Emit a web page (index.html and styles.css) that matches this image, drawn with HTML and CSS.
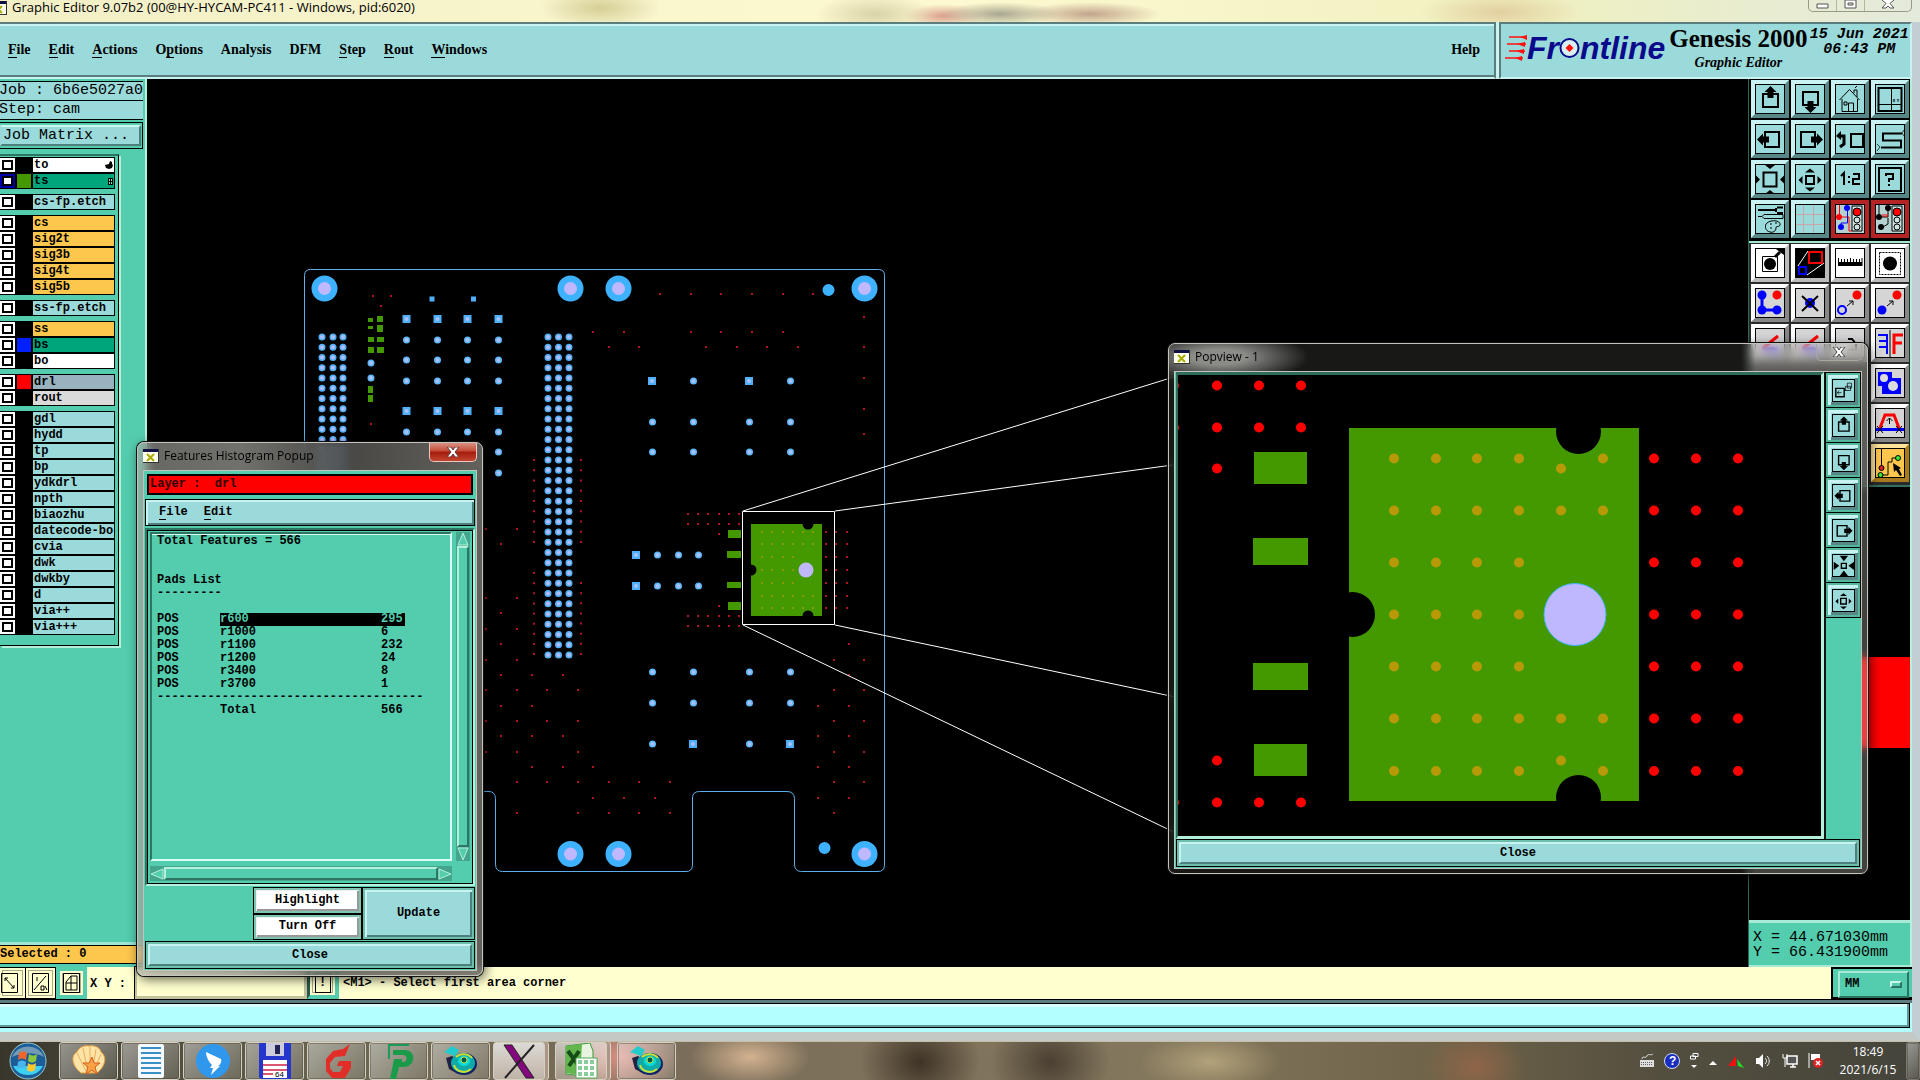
FILE: index.html
```html
<!DOCTYPE html>
<html lang="en">
<head>
<meta charset="utf-8">
<title>Graphic Editor 9.07b2</title>
<link rel="stylesheet" href="styles.css">
</head>
<body>
<svg class="defs" aria-hidden="true">
  <symbol id="i-up" viewBox="0 0 30 30"><path d="M8 10h15v13H8z" class="l2"/><path d="M15.500 2l6 6h-3v6h-6V8h-3z" class="f"/></symbol>
  <symbol id="i-down" viewBox="0 0 30 30"><path d="M8 8h15v13H8z" class="l2"/><path d="M15.500 29l6-6h-3v-6h-6v6h-3z" class="f"/></symbol>
  <symbol id="i-left" viewBox="0 0 30 30"><path d="M10 8h14v15H10z" class="l2"/><path d="M2 15.500l6-6v3h6v6H8v3z" class="f"/></symbol>
  <symbol id="i-right" viewBox="0 0 30 30"><path d="M6 8h14v15H6z" class="l2"/><path d="M28 15.500l-6-6v3h-6v6h6v3z" class="f"/></symbol>
  <symbol id="i-home" viewBox="0 0 30 30"><path d="M4.500 16L14.500 5.500l10 10.500M7 15v12.500h15.500V15M13.500 27V19h5v8M9 18h3v3H9zM19 9V6h3v7M20 4l2-2" class="l1"/></symbol>
  <symbol id="i-xy" viewBox="0 0 30 30"><path d="M3.500 4h23v23h-23z" class="l2"/><path d="M16.500 4v23M4 20.500h22" class="l1"/><path d="M18 15l2 3m0-3l-2 3M22 15l1 1.500 1-1.500M23 16.500V18" class="l1 thin"/></symbol>
  <symbol id="i-undo" viewBox="0 0 30 30"><path d="M16 10h12v13H16z" class="l2"/><path d="M5 12h4v8l-4 3" class="l3"/><path d="M1 12l5-5v9z" class="f"/></symbol>
  <symbol id="i-s" viewBox="0 0 30 30"><path d="M27 9.500H8v7h18v7H6" class="l2"/><path d="M29 6l-2 3 2 3M2 20l3 3-3 4" class="l1 thin"/></symbol>
  <symbol id="i-zoomout" viewBox="0 0 30 30"><path d="M8.500 8.500h13v14h-13z" class="l2"/><path d="M15 5l-5-4h10zM15 26l-5 4h10zM5 15.500l-4-4v8zM25 15.500l4-4v8z" class="f"/></symbol>
  <symbol id="i-zoomin" viewBox="0 0 30 30"><path d="M11 12h8v8h-8z" class="l2"/><path d="M15 4.500l5 4H10zM15 27.500l-5-4h10zM3.500 16l4-4v8zM26.500 16l-4-4v8z" class="f"/></symbol>
  <symbol id="i-shrink" viewBox="0 0 30 30"><path d="M12 12h7v7h-7z" class="l2"/><path d="M15.500 9l-6-8h12zM15.500 22l-6 8h12zM9 15.500l-8-6v12zM22 15.500l8-6v12z" class="f"/></symbol>
  <symbol id="i-12" viewBox="0 0 30 30"><path d="M6 12l3-3v12M14 12v2M14 17v2M18 10h6v5h-6v5h7" class="l2"/></symbol>
  <symbol id="i-help" viewBox="0 0 30 30"><path d="M4 4h22v23H4z" class="l2"/><path d="M11 12v-2h7v5h-4v3M14 20v2" class="l2"/></symbol>
  <symbol id="i-tools" viewBox="0 0 30 30"><path d="M3 6h18M22 3.500h6M22 9h6M21 4v4" class="l2"/><path d="M3 12.500h4l2-2h19v4H9l-2-2M11 20c4-5 15-4 14 1-1 3-4 0-4 3s-3 5-6 4c-5-1-5-6-4-8zM15 20h2M20 19h2M15 24h2" class="l1"/></symbol>
  <symbol id="i-grid" viewBox="0 0 30 30"><path d="M8.500 1v28M18.500 1v28M1 10.500h28M1 20.500h28" class="l1 pink"/></symbol>
  <symbol id="i-net" viewBox="0 0 30 30"><path d="M4.500 1v12H14v14h3" class="l1 red"/><path d="M12.500 5v14H6v4" class="l1 blue"/><circle cx="4" cy="13" r="3" fill="#f00"/><circle cx="12" cy="4" r="3" fill="#00f"/><circle cx="6" cy="23" r="3" fill="#00f"/><path d="M17 2h10v25H17z" class="l1 box"/><circle cx="22" cy="8" r="4" fill="#f00" stroke="#000"/><circle cx="22" cy="16" r="3" class="l1"/><circle cx="22" cy="23" r="3" class="l1"/></symbol>
  <symbol id="i-net2" viewBox="0 0 30 30"><path d="M4 1v12h9V5M13 14v6L8 23" class="l1"/><path d="M8 13v-3m2 3v-3m2 3v-3" class="l1 red"/><circle cx="4" cy="13" r="3"/><circle cx="13" cy="4" r="3"/><circle cx="6" cy="23" r="3"/><path d="M17 2h10v25H17z" class="l1 box"/><circle cx="22" cy="8" r="4" fill="#f00" stroke="#000"/><circle cx="22" cy="16" r="3" class="l1"/><circle cx="22" cy="23" r="3" class="l1"/></symbol>
  <symbol id="i-move" viewBox="0 0 30 30"><path d="M7.500 8.500h15v15h-15z" class="l1"/><circle cx="15" cy="16" r="6"/><path d="M20 9l5-5" class="l3"/><path d="M29 0v7l-8-6z" class="f"/></symbol>
  <symbol id="i-pop" viewBox="0 0 30 30"><path d="M0 0h30v30H0z" class="f"/><path d="M13 3L3 18M29 15L12 27" stroke="#fff" fill="none"/><path d="M14 4h13v11H14z" class="l2 red"/><path d="M4 19h7v7H4z" class="l2 blue"/></symbol>
  <symbol id="i-rule" viewBox="0 0 30 30"><path d="M3 14h24v4H3z" class="f"/><path d="M3.500 10v4M6.500 11v3M9.500 11v3M12.500 11v3M15.500 10v4M18.500 11v3M21.500 11v3M24.500 11v3M27 10v8" class="l1"/></symbol>
  <symbol id="i-sel" viewBox="0 0 30 30"><path d="M4.500 4.500h21v22h-21z" class="l1" stroke-dasharray="2 1"/><circle cx="15" cy="15.500" r="7"/></symbol>
  <symbol id="i-poly" viewBox="0 0 30 30"><path d="M7 7v15h15" class="l3 blue"/><circle cx="7" cy="7" r="4.500" fill="#00f"/><circle cx="7" cy="22" r="4.500" fill="#00f"/><circle cx="22" cy="22" r="4.500" fill="#00f"/><circle cx="22" cy="7" r="4.500" fill="#f00"/></symbol>
  <symbol id="i-del" viewBox="0 0 30 30"><circle cx="15" cy="15" r="5" fill="#00f"/><path d="M7 8l16 15M23 8L7 23" class="l2"/></symbol>
  <symbol id="i-mv1" viewBox="0 0 30 30"><circle cx="7" cy="22" r="4" class="l2 blue"/><circle cx="22" cy="7" r="4.500" fill="#f00"/><path d="M12 18l6-5m-4 0h4v4" class="l1"/></symbol>
  <symbol id="i-mv2" viewBox="0 0 30 30"><circle cx="7" cy="22" r="4.500" fill="#00f"/><circle cx="22" cy="7" r="4.500" fill="#f00"/><path d="M12 18l6-5m-4 0h4v4" class="l1"/></symbol>
  <symbol id="i-cut" viewBox="0 0 30 30"><path d="M8 20l15-12" class="l3 red"/><path d="M7 21h14v5" class="l3 blue"/></symbol>
  <symbol id="i-rot" viewBox="0 0 30 30"><path d="M13 11h4l4 5v6h-8" class="l2"/></symbol>
  <symbol id="i-mirror" viewBox="0 0 30 30"><path d="M3 7h9v19M4 13h8M4 19h8" class="l2 blue"/><path d="M15 2v27" class="l1"/><path d="M28 7h-9v19M27 15h-8" class="l3 red"/></symbol>
  <symbol id="i-copy" viewBox="0 0 30 30"><path d="M3 4h14v6h9v16H7v-8H3z" fill="#00f"/><circle cx="9" cy="10" r="4" fill="#ddd"/><circle cx="18" cy="18" r="5" fill="#ddd"/></symbol>
  <symbol id="i-trap" viewBox="0 0 30 30"><path d="M5 20L10 7h9l5 13" class="l3 red"/><path d="M0 21.500h30" class="l3 blue"/><path d="M14.500 16v-6m-3 3l3-3 3 3M2 18l6 7m0-7l-6 7M21 18l6 7m0-7l-6 7" class="l1"/></symbol>
  <symbol id="i-edit" viewBox="0 0 30 30"><path d="M6.500 1v18M6 27h7V14h4V10h5" class="l1"/><circle cx="6.500" cy="20" r="2.500" fill="#d22" stroke="#000"/><circle cx="5.500" cy="27" r="2.500" fill="#3e3" stroke="#000"/><circle cx="23" cy="10" r="2.500" fill="#3e3" stroke="#000"/><path d="M18 15l8 5-2 1 3 6-2 1-4-6-2 2z" class="f"/></symbol>
  <symbol id="i-view" viewBox="0 0 30 30"><path d="M4 12h12v12H4z" class="l2"/><path d="M20.500 4.500h6v7h-6zM18 9h7v6h-7zM16 15h3M12 18H6m3-3l-3 3 3 3" class="l1"/></symbol>
  <symbol id="i-win" viewBox="0 0 16 14"><path d="M0 0h16v14H0z" fill="#fffff0"/><path d="M0 0h16v3H0z" fill="#114"/><path d="M4 5l7 7M11 5l-7 7" stroke="#aa0" stroke-width="2"/><path d="M0 13.500h16M15.500 0v14" stroke="#333"/></symbol>
  <symbol id="i-disc" viewBox="0 0 36 36"><path d="M3 15l6-2 6 4v14l-9-5z" fill="#224"/><ellipse cx="21" cy="21" rx="13" ry="11" fill="#126"/><ellipse cx="20" cy="20" rx="12" ry="10" fill="#1aa"/><path d="M11 22a10 9 0 0 0 17 4M13 14a10 8 0 0 1 16 1" stroke="#cd3" stroke-width="2" fill="none"/><ellipse cx="21" cy="18" rx="6" ry="5" fill="#0dd"/><ellipse cx="21" cy="17" rx="3" ry="3" fill="#054" stroke="#cd3"/><path d="M1 9l8-6 7 4-4 6z" fill="#2cc"/></symbol>
</svg>

<header class="titlebar">
  <svg class="winicon"><use href="#i-win"/></svg>
  <h1>Graphic Editor 9.07b2 (00@HY-HYCAM-PC411 - Windows, pid:6020)</h1>
  <div class="caption">
    <button aria-label="Minimize"><svg width="14" height="12"><path d="M1 4h11v4H1z"/></svg></button>
    <button aria-label="Restore"><svg width="14" height="12"><path d="M1 0h11v8H1zM4 3h5v2H4z"/></svg></button>
    <button class="wide" aria-label="Close"><svg width="14" height="12"><path d="M1 0l4 3.500L1 8h4l2-2 2 2h4L9 3.500 13 0"/></svg></button>
  </div>
</header>

<div class="app">
  <div class="top">
    <nav class="menubar bevel-in">
      <a href="#"><u>F</u>ile</a><a href="#"><u>E</u>dit</a><a href="#"><u>A</u>ctions</a><a href="#">O<u>p</u>tions</a><a href="#">Analysis</a><a href="#">DFM</a><a href="#"><u>S</u>tep</a><a href="#"><u>R</u>out</a><a href="#"><u>W</u>indows</a><a href="#" class="help">Help</a>
    </nav>
    <div class="brand bevel-in">
      <div class="logo">
        <svg width="22" height="26"><path d="M4 2h18M2 9h19M4 16h16M0 23h18" stroke="#f11" stroke-width="1.500"/><path d="M22 0v5l-7-3zM20 7v5l-8-3zM19 14v5l-8-3zM17 21v5l-7-3z" fill="#f11"/></svg>
        <span>Fr</span><svg width="21" height="22"><circle cx="10.500" cy="11" r="9" fill="#d8f0f0" stroke="#0a0a8c" stroke-width="2"/><path d="M10.500 7l4 4-4 4-4-4z" fill="#f11"/></svg><span>ntline</span>
      </div>
      <div class="product"><strong>Genesis 2000</strong><em>Graphic Editor</em></div>
      <div class="date">15 Jun 2021<br>06:43 PM</div>
    </div>
  </div>

  <div class="work">
    <aside class="left">
      <div class="job"><div>Job : 6b6e5027a0</div><div>Step: cam</div></div>
      <div class="matrix"><button>Job Matrix ...</button></div>
      <div class="layers">
        <div class="grp">
          <label class="white"><input type="checkbox"><i></i><span>to<svg width="10" height="10"><path d="M1 5l4-1 1-3 2 1v2l1 1-1 3-3 1-3-1z"/></svg></span></label>
          <label class="green on"><input type="checkbox" checked><i class="c-green"></i><span>ts<svg width="6" height="7"><path d="M0 0h5v7H0z"/><path d="M1 1h1v2H1zM3 1h1v2H3zM1 4h1v2H1zM3 4h1v2H3z" fill="#9db"/></svg></span></label>
        </div>
        <div class="grp"><label><input type="checkbox"><i></i><span>cs-fp.etch</span></label></div>
        <div class="grp gold">
          <label><input type="checkbox"><i></i><span>cs</span></label>
          <label><input type="checkbox"><i></i><span>sig2t</span></label>
          <label><input type="checkbox"><i></i><span>sig3b</span></label>
          <label><input type="checkbox"><i></i><span>sig4t</span></label>
          <label><input type="checkbox"><i></i><span>sig5b</span></label>
        </div>
        <div class="grp"><label><input type="checkbox"><i></i><span>ss-fp.etch</span></label></div>
        <div class="grp">
          <label class="orange"><input type="checkbox"><i></i><span>ss</span></label>
          <label class="green"><input type="checkbox"><i class="c-blue"></i><span>bs</span></label>
          <label class="white"><input type="checkbox"><i></i><span>bo</span></label>
        </div>
        <div class="grp">
          <label class="slate"><input type="checkbox"><i class="c-red"></i><span>drl</span></label>
          <label class="grey"><input type="checkbox"><i></i><span>rout</span></label>
        </div>
        <div class="grp">
          <label><input type="checkbox"><i></i><span>gdl</span></label>
          <label><input type="checkbox"><i></i><span>hydd</span></label>
          <label><input type="checkbox"><i></i><span>tp</span></label>
          <label><input type="checkbox"><i></i><span>bp</span></label>
          <label><input type="checkbox"><i></i><span>ydkdrl</span></label>
          <label><input type="checkbox"><i></i><span>npth</span></label>
          <label><input type="checkbox"><i></i><span>biaozhu</span></label>
          <label><input type="checkbox"><i></i><span>datecode-bo</span></label>
          <label><input type="checkbox"><i></i><span>cvia</span></label>
          <label><input type="checkbox"><i></i><span>dwk</span></label>
          <label><input type="checkbox"><i></i><span>dwkby</span></label>
          <label><input type="checkbox"><i></i><span>d</span></label>
          <label><input type="checkbox"><i></i><span>via++</span></label>
          <label><input type="checkbox"><i></i><span>via+++</span></label>
        </div>
      </div>
      <div class="selected">Selected : 0</div>
    </aside>

    <svg class="canvas" id="board"></svg>

    <aside class="right">
      <div class="tools teal">
        <button aria-label="Pan up"><svg><use href="#i-up"/></svg></button>
        <button aria-label="Pan down"><svg><use href="#i-down"/></svg></button>
        <button aria-label="Home"><svg><use href="#i-home"/></svg></button>
        <button aria-label="XY window"><svg><use href="#i-xy"/></svg></button>
        <button aria-label="Pan left"><svg><use href="#i-left"/></svg></button>
        <button aria-label="Pan right"><svg><use href="#i-right"/></svg></button>
        <button aria-label="Previous"><svg><use href="#i-undo"/></svg></button>
        <button aria-label="Serpentine"><svg><use href="#i-s"/></svg></button>
        <button aria-label="Zoom out"><svg><use href="#i-zoomout"/></svg></button>
        <button aria-label="Zoom in"><svg><use href="#i-zoomin"/></svg></button>
        <button aria-label="Scale"><svg><use href="#i-12"/></svg></button>
        <button aria-label="Info"><svg><use href="#i-help"/></svg></button>
        <button aria-label="Setup"><svg><use href="#i-tools"/></svg></button>
        <button aria-label="Grid"><svg><use href="#i-grid"/></svg></button>
        <button class="alert" aria-label="Snap"><svg><use href="#i-net"/></svg></button>
        <button class="alert" aria-label="Snap off"><svg><use href="#i-net2"/></svg></button>
      </div>
      <div class="tools silver">
        <button class="lit" aria-label="Resize"><svg><use href="#i-move"/></svg></button>
        <button class="lit" aria-label="Popview"><svg><use href="#i-pop"/></svg></button>
        <button class="lit" aria-label="Measure"><svg><use href="#i-rule"/></svg></button>
        <button class="lit" aria-label="Select"><svg><use href="#i-sel"/></svg></button>
        <button aria-label="Polyline"><svg><use href="#i-poly"/></svg></button>
        <button aria-label="Delete"><svg><use href="#i-del"/></svg></button>
        <button aria-label="Move"><svg><use href="#i-mv1"/></svg></button>
        <button aria-label="Copy"><svg><use href="#i-mv2"/></svg></button>
        <button aria-label="Cut"><svg><use href="#i-cut"/></svg></button>
        <button aria-label="Break"><svg><use href="#i-cut"/></svg></button>
        <button aria-label="Rotate"><svg><use href="#i-rot"/></svg></button>
        <button aria-label="Mirror"><svg><use href="#i-mirror"/></svg></button>
        <button class="last" aria-label="Substitute"><svg><use href="#i-copy"/></svg></button>
        <button class="last" aria-label="Stretch"><svg><use href="#i-trap"/></svg></button>
        <button class="last gold" aria-label="Net edit"><svg><use href="#i-edit"/></svg></button>
      </div>
      <svg class="overview"><rect x="-10" y="170" width="172" height="91" fill="#f00"/></svg>
      <div class="coords">X = 44.671030mm<br>Y = 66.431900mm</div>
    </aside>
  </div>

  <div class="status">
    <button aria-label="Line mode"><svg width="17" height="20"><path d="M.5.5h16v19H.5z" class="l1"/><path d="M4 5l9 10M4 5v3m0-3h3M13 15v-3m0 3h-3" class="l1"/></svg></button>
    <button aria-label="Ratio mode"><svg width="17" height="20"><path d="M.5.5h16v19H.5z" class="l1"/><path d="M2 17L14 3M5 4v4M9 13h3v4H9zM13 13l2 4" class="l1"/></svg></button>
    <button class="act" aria-label="Snap mode"><svg width="17" height="20"><path d="M.5.5h16v19H.5z" class="l1"/><path d="M3 9l5-6h6v14H3zM8 3v14M3 10h11" class="l1"/></svg></button>
    <label for="xy">X Y :</label>
    <input id="xy" type="text">
    <button class="act bang" aria-label="Apply"><b>!</b></button>
    <p>&lt;M1&gt; - Select first area corner</p>
    <div class="unit"><button>MM<i></i></button></div>
  </div>
  <div class="prompt"><div></div></div>
</div>

<footer class="taskbar">
  <button class="start" aria-label="Start"><svg width="38" height="38"><circle cx="19" cy="19" r="18" fill="#1c5c98" stroke="#9cc" stroke-width="1"/><path d="M4 24a17 17 0 0 0 30 0z" fill="#3bd0f4"/><path d="M3 15a17 16 0 0 1 32 0c-9-5-20-5-32 0z" fill="#8ab" opacity=".8"/><path d="M10 11c3-2 5-2 8 0l-1 7c-3-2-5-2-8 0z" fill="#f3662b"/><path d="M20 12c3 2 5 2 8 0l-1 7c-3 2-5 2-8 0z" fill="#8cc63e"/><path d="M9 20c3-2 5-2 8 0l-1 7c-3-2-5-2-8 0z" fill="#4bb4ee"/><path d="M19 21c3 2 5 2 8 0l-1 7c-3 2-5 2-8 0z" fill="#fdc82c"/></svg></button>
  <button aria-label="Shell"><svg width="36" height="36"><path d="M10 30C0 22 0 12 6 9c2-5 8-7 12-6 5-1 11 1 12 6 6 4 5 14-4 21z" fill="#fce3a8" stroke="#e8a03c"/><path d="M16 30L6 10M17 30L12 5M19 30V4M21 30l4-24M22 30l8-19" stroke="#efae52" fill="none"/><path d="M21 14l2 6 6 0-5 4 2 7-5-4-6 4 2-7-5-4 6 0z" fill="#f7a046" stroke="#d35f1e"/></svg></button>
  <button aria-label="Notes"><svg width="36" height="36"><rect x="5" y="1" width="26" height="34" rx="2" fill="#f4faff"/><path d="M8 5h20M8 10h20M8 15h20M8 20h20M8 25h20M8 30h20" stroke="#3c8fc4" stroke-width="2"/></svg></button>
  <button aria-label="Messenger"><svg width="36" height="36"><circle cx="18" cy="18" r="17" fill="#2f97ec"/><path d="M11 9l15 7c1 3-1 6-3 7h2L16 32l2-7h-3l2-3c-3-3-6-8-6-13z" fill="#fff"/></svg></button>
  <button aria-label="Total Commander"><svg width="36" height="36"><path d="M2 0h32v36H4l-2-2z" fill="#2436cc"/><path d="M9 0h18v13H9z" fill="#ccd"/><path d="M18 2h5v9h-5z" fill="#225"/><path d="M6 17h24v18H6z" fill="#fff"/><path d="M6 22h24M6 27h24M6 31h10" stroke="#c24" stroke-width="1.500"/><text x="18" y="34" font-size="8" font-weight="normal" font-family="Liberation Sans">64</text></svg></button>
  <button aria-label="Genesis"><svg width="36" height="36"><path d="M31 1l-7 5-10 2-7 8v12l6 7h13l6-10v-7h-12l-2 5h6l-3 6h-7l-3-4v-5l5-6 10-1z" fill="#e22e28"/></svg></button>
  <button aria-label="Project"><svg width="36" height="36"><path d="M8 16V2h20" fill="none" stroke="#1a9b5a" stroke-width="2"/><path d="M12 7h13c12 2 8 18-3 17h-4l-3 12h-6l4-20h8v3h2c4-2 3-6 0-7H12z" fill="#1a9b4a"/></svg></button>
  <button aria-label="Genesis session"><svg width="36" height="36"><use href="#i-disc"/></svg></button>
  <button class="active" aria-label="X server"><svg width="36" height="36"><path d="M3 2h8l22 33h-8z" fill="#83087e" stroke="#222"/><path d="M33 2L4 35" stroke="#222" stroke-width="2"/></svg></button>
  <button class="stack" aria-label="Excel"><svg width="36" height="36"><path d="M3 3l24-3 3 8v26l-27-3z" fill="#e8f4e0" stroke="#3a9a3a"/><path d="M3 3l16-2-2 31-14-2z" fill="#62b64c"/><path d="M5 8l11 15M16 8L6 23" stroke="#164a16" stroke-width="4"/><path d="M13 15h21v20H13z" fill="#fff" stroke="#5a5"/><path d="M15 17h4v4h-4zM21 17h4v4h-4zM27 17h4v4h-4zM15 23h4v4h-4zM21 23h4v4h-4zM27 23h4v4h-4zM15 29h4v4h-4zM21 29h4v4h-4zM27 29h4v4h-4z" fill="#8c9"/></svg></button>
  <button aria-label="Genesis session 2"><svg width="36" height="36"><use href="#i-disc"/></svg></button>
  <div class="tray">
    <svg width="14" height="16"><path d="M0 7h14v7H0z" fill="#ddd"/><path d="M1 9.500h12M1 11.500h12" stroke="#666" stroke-dasharray="1 1"/><path d="M2 6c0-4 4 0 5-3s4 0 6-2" stroke="#ddd" fill="none"/></svg>
    <svg width="16" height="16"><circle cx="8" cy="8" r="7.500" fill="#1a2cc0" stroke="#cde"/><text x="5" y="12" font-size="12" font-weight="bold" fill="#fff" font-family="Liberation Sans">?</text></svg>
    <svg width="9" height="18"><path d="M3 1.500h5v3H3zM.5 4h5v3h-5z" fill="#444" stroke="#fff"/><path d="M1 13h6l-3 3z" fill="#fff"/></svg>
    <svg width="9" height="14"><path d="M0 11h8L4 7z" fill="#fff"/></svg>
    <svg width="16" height="18"><path d="M0 14L8 4v10z" fill="#e11"/><path d="M9 7l7 9-6-2z" fill="#2d2"/></svg>
    <svg width="16" height="16"><path d="M0 5h3l4-4v14l-4-4H0z" fill="#fff"/><path d="M9 5c2 2 2 4 0 6M11 3c3 3 3 7 0 10" stroke="#eee" fill="none"/></svg>
    <svg width="16" height="16"><path d="M5 3h10v8H5zM8 14h6M11 11v3" fill="#555" stroke="#fff" stroke-width="1.500"/><path d="M1 1v4h4V1M3 5v9" stroke="#fff" fill="none"/></svg>
    <svg width="16" height="16"><path d="M1 0v15" stroke="#fff"/><path d="M3 1h9v6H3z" fill="#fff"/><circle cx="10" cy="10" r="5" fill="#d22"/><path d="M8 8l4 4m0-4l-4 4" stroke="#fff" stroke-width="1.500"/></svg>
  </div>
  <time>18:49<br>2021/6/15</time>
  <button class="desk" aria-label="Show desktop"></button>
</footer>

<section class="win popview">
  <div class="wt"><svg class="winicon"><use href="#i-win"/></svg><h2>Popview - 1</h2><button class="x" aria-label="Close window"><svg width="14" height="10"><path d="M1 0l4 5-4 5h4l2-3 2 3h4L9 5l4-5H9L7 3 5 0z"/></svg></button></div>
  <div class="wbody">
    <div class="pv">
      <svg class="pvcanvas" id="detail"></svg>
      <div class="side">
        <button aria-label="View"><svg><use href="#i-view"/></svg></button>
        <button aria-label="Up"><svg><use href="#i-up"/></svg></button>
        <button aria-label="Down"><svg><use href="#i-down"/></svg></button>
        <button aria-label="Left"><svg><use href="#i-left"/></svg></button>
        <button aria-label="Right"><svg><use href="#i-right"/></svg></button>
        <button aria-label="Out"><svg><use href="#i-shrink"/></svg></button>
        <button aria-label="In"><svg><use href="#i-zoomin"/></svg></button>
      </div>
    </div>
    <div class="closebar"><button>Close</button></div>
  </div>
</section>

<section class="win hist">
  <div class="wt"><svg class="winicon"><use href="#i-win"/></svg><h2>Features Histogram Popup</h2><button class="x red" aria-label="Close window"><svg width="14" height="10"><path d="M1 0l4 5-4 5h4l2-3 2 3h4L9 5l4-5H9L7 3 5 0z"/></svg></button></div>
  <div class="wbody">
    <div class="layer">Layer :&nbsp; drl</div>
    <nav class="hmenu"><a href="#"><u>F</u>ile</a><a href="#"><u>E</u>dit</a></nav>
    <div class="frame">
      <div class="list">
        <div>Total Features = 566</div><br><br>
        <div>Pads List</div><div>---------</div><br>
        <table>
          <tr><td>POS</td><td class="hl">r600</td><td class="hl"><span>295</span></td></tr>
          <tr><td>POS</td><td>r1000</td><td>6</td></tr>
          <tr><td>POS</td><td>r1100</td><td>232</td></tr>
          <tr><td>POS</td><td>r1200</td><td>24</td></tr>
          <tr><td>POS</td><td>r3400</td><td>8</td></tr>
          <tr><td>POS</td><td>r3700</td><td>1</td></tr>
          <tr><td colspan="3">-------------------------------------</td></tr>
          <tr><td></td><td>Total</td><td>566</td></tr>
        </table>
      </div>
      <div class="vs"><svg width="12" height="14"><path d="M6 1l5 12H1z"/></svg><i></i><svg width="12" height="14"><path d="M6 13L1 1h10z"/></svg></div>
      <div class="hs"><svg width="14" height="12"><path d="M1 6l12-5v10z"/></svg><i></i><svg width="14" height="12"><path d="M13 6L1 1v10z"/></svg></div>
    </div>
    <div class="acts">
      <div class="pair"><button>Highlight</button><button>Turn Off</button></div>
      <button class="upd">Update</button>
    </div>
    <div class="closebar"><button>Close</button></div>
  </div>
</section>
<script src="script.js"></script>
</body>
</html>
```
FILE: styles.css
```css
* { box-sizing: border-box; }
html, body { height: 100%; }
body { margin: 0; display: flex; flex-direction: column; background: #000; overflow: hidden; position: relative; font: bold 12px/13px "Liberation Mono", monospace; color: #000; }
h1, h2, p { margin: 0; font: inherit; }
a { color: inherit; text-decoration: none; }
u { text-decoration: none; border-bottom: 1px solid #000; }
button { font: inherit; color: inherit; padding: 0; border-radius: 0; border: 0; background: none; }
button svg { display: block; }
.defs { position: absolute; width: 0; height: 0; }
.l1, .l2, .l3 { fill: none; stroke: #000; }
.l2 { stroke-width: 2; }
.l3 { stroke-width: 3; }
.thin { stroke-width: .7; }
.f { fill: #000; }
.red { stroke: #f00; }
.blue { stroke: #00f; }
.pink { stroke: #c9a5aa; }
.box { fill: #cde4e2; }
.winicon { width: 16px; height: 14px; flex: none; }

.titlebar { height: 22px; flex: none; display: flex; align-items: flex-start; padding-right: 8px;
  background: radial-gradient(ellipse 60px 20px at 875px 14px, #d9d3a8, transparent), radial-gradient(ellipse 60px 12px at 1000px 14px, #a9a690, transparent), radial-gradient(ellipse 40px 12px at 943px 16px, #dba08e, transparent), radial-gradient(ellipse 70px 12px at 1090px 14px, #c3a48c, transparent), radial-gradient(ellipse 60px 20px at 600px 8px, #d6cf96, transparent), radial-gradient(ellipse 80px 20px at 1500px 12px, #e3cfa0, transparent), linear-gradient(90deg, #f2eec6, #fdf9d0 50%, #eff0c0 80%, #e4eadc); }
.titlebar .winicon { margin-left: -9px; margin-top: 1px; }
.titlebar h1 { font: 13px/14px "Open Sans", sans-serif; margin-left: 5px; flex: 1; white-space: nowrap; }
.caption { display: flex; height: 12px; border: 1px solid #999a86; border-top: 0; border-radius: 0 0 5px 5px; }
.caption button { width: 28px; border-right: 1px solid #b5b59c; display: flex; justify-content: center; }
.caption .wide { width: 46px; border: 0; }
.caption svg path { fill: #fff; stroke: #555; fill-rule: evenodd; }

.app { flex: 1; min-height: 0; display: flex; flex-direction: column; border-right: 8px solid #c3ced3; border-bottom: 9px solid #c5c9c6; }
.top { display: flex; height: 57px; flex: none; background: #c9f2f2; gap: 3px; }
.bevel-in { background: #9bdada; border: 2px solid; border-color: #5b7d7d #c9f2f2 #c9f2f2 #5b7d7d; }
.menubar { flex: 1; display: flex; align-items: center; gap: 18px; padding: 0 14px 1px 8px; border-left: 0; border-right-color: #5b7d7d; box-shadow: inset 0 2px #c9f2f2, inset 0 -2px #5b7d7d; font: bold 14px/16px "Liberation Serif", serif; }
.help { margin-left: auto; }
.brand { width: 413px; display: flex; padding-left: 4px; }
.logo { display: flex; align-items: center; height: 48px; font: italic bold 32px/32px "Liberation Sans", sans-serif; color: #0a0a8c; }
.product { display: flex; flex-direction: column; align-items: center; margin-left: 3px; width: 140px; font-family: "Liberation Serif", serif; }
.product strong { font-size: 25px; line-height: 29px; white-space: nowrap; }
.product em { font-size: 14px; line-height: 20px; }
.date { flex: 1; text-align: center; font-size: 15px; line-height: 15px; font-style: italic; padding-top: 3px; white-space: nowrap; }

.work { flex: 1; min-height: 0; display: flex; }
.canvas { flex: 1; min-width: 0; height: 100%; display: block; }
.left { width: 147px; flex: none; background: #54cdae; border-right: 2px solid #b4f0dc; display: flex; flex-direction: column; white-space: nowrap; }
.job, .matrix { font: 15px/17px "Liberation Mono", monospace; border: 1px solid #000; background: #000; margin: 2px 2px 0 -2px; }
.job { display: grid; gap: 1px; }
.job div { background: #9bdada; height: 18px; }
.matrix { background: #54cdae; padding: 2px 1px; }
.matrix button { width: 100%; text-align: left; height: 21px; padding-left: 1px; background: #9bdada; border: 2px solid; border-color: #cdf6f0 #4d7f7c #4d7f7c #9bdada; }
.layers { margin-top: 5px; width: 119px; border: 1px solid #000; border-left: 0; border-top: 2px solid #2a7461; padding: 1px 3px 10px 0; display: grid; gap: 5px; box-shadow: 2px 2px #b4f0dc; }
.grp { background: #000; }
.grp label { display: grid; grid-template-columns: 15px 14px 1fr; column-gap: 2px; height: 16px; padding: 1px 1px 1px 0; align-items: stretch; }
.grp input { appearance: none; margin: 0; width: 15px; height: 14px; background: #fff; border: 2px solid #fff; box-shadow: inset 0 0 0 2px #000; }
.on input { border-color: #0000a8; }
.grp span { background: #9bdada; padding-left: 1px; line-height: 14px; display: flex; justify-content: space-between; align-items: center; overflow: hidden; }
.gold span, .orange span { background: #fdc74e; }
.white span { background: #fff; }
.grp .green span { background: #00a57c; }
.grp .orange span { background: #fdc74e; }
.grp .white span { background: #fff; }
.grp.gold span { background: #fdc74e; }
.grp .slate span { background: #98b3bf; }
.grp .grey span { background: #dadada; }
.c-green { background: #449900; }
.c-blue { background: #0020ff; }
.c-red { background: #f00; }
.selected { margin-top: auto; margin-bottom: 3px; height: 19px; line-height: 17px; background: #fdc74e; border: 1px solid #000; border-width: 1px 0; box-shadow: 0 -3px #9fe8d6; }

.right { width: 164px; flex: none; display: flex; flex-direction: column; border-left: 1px solid #2a6b58; border-right: 2px solid #b4f0dc; }
.tools { display: grid; grid-template-columns: repeat(4, 40px); grid-auto-rows: 40px; padding: 1px 0 1px 1px; background: #000; border-bottom: 2px solid #a4e5d0; }
.tools button { width: 38px; height: 38px; background: #9bdada; border: 4px solid; border-color: #c9f2f2 #578887 #578887 #c9f2f2; margin-left: 1px; }
.tools button svg { width: 30px; height: 30px; outline: 1px solid #000; outline-offset: -1px; }
.silver { background: #2b2b2b; border-bottom-color: #32705f; }
.silver button { background: #d5d5d5; border-color: #fff #878787 #878787 #fff; }
.silver .lit { background: #fff; border-color: #fff #bbb #bbb #fff; }
.tools .alert { border-color: #b42424; background: #b5d2d0; }
.silver .last { grid-column: 4; }
.silver .gold { background: #fdc74e; border-color: #ffe49a #a87a20 #a87a20 #ffe49a; }
.overview { flex: 1; min-height: 0; width: 100%; display: block; }
.coords { height: 47px; flex: none; background: #54cdae; border-top: 3px solid #a9ead6; border-bottom: 2px solid #a9ead6; padding: 7px 0 0 4px; font-size: 15px; line-height: 15px; font-weight: normal; }

.status { height: 33px; flex: none; display: flex; background: #ffffcf; border-bottom: 1px solid #000; }
.status > button { width: 30px; border: 1px solid #000; border-left: 0; box-shadow: inset 0 0 0 2px #ffffcf, inset 0 0 0 3px #aaa98a; display: grid; place-items: center; }
.status > button:first-child { width: 26px; padding-right: 6px; }
.status > .act { width: 31px; background: #ffffcf; border: 4px solid #54cdae; }
.status > .bang { width: 32px; border-left: 3px solid #24584a; }
.status b { border: 1px solid #000; width: 16px; height: 20px; line-height: 18px; }
.status label { padding: 11px 8px 0 3px; width: 48px; white-space: nowrap; }
.status input { width: 172px; background: #ffffcf; border: 3px solid #c3c29b; border-left-width: 2px; outline: 1px solid #000; font: inherit; }
.status p { flex: 1; padding: 10px 0 0 4px; }
.unit { width: 81px; background: #54cdae; border: 2px solid #000; border-right: 0; padding: 2px 3px 2px 5px; }
.unit button { width: 100%; height: 27px; display: flex; justify-content: space-between; align-items: center; padding: 0 5px; border: 2px solid; border-color: #a9ead6 #2a7461 #2a7461 #a9ead6; }
.unit i { width: 12px; height: 7px; border: 2px solid; border-color: #c9f9ec #2a7461 #2a7461 #c9f9ec; }
.prompt { height: 32px; flex: none; background: #b3ffff; border-top: 3px solid #5f7d80; padding: 0 2px 4px 0; }
.prompt div { height: 25px; border: 1px solid #000; border-left: 0; background: #b3ffff; box-shadow: inset -2px -2px #5f9899, inset 0 3px #d9ffff; }

.taskbar { height: 39px; flex: none; display: flex; align-items: center; border-top: 1px solid #c3bda9;
  background: radial-gradient(ellipse 60px 40px at 620px 15px, #d88f82, transparent), radial-gradient(ellipse 60px 30px at 750px 15px, #d3b290, transparent), radial-gradient(ellipse 70px 30px at 1210px 20px, #b3a27a, transparent), radial-gradient(ellipse 50px 40px at 1475px 25px, #8f6548, transparent), radial-gradient(ellipse 60px 50px at 920px 20px, #3f3326, transparent), radial-gradient(ellipse 60px 50px at 1050px 20px, #4a4032, transparent), linear-gradient(90deg, #38362c, #6b6753 18%, #7a6d59 35%, #83775d 60%, #6f6449 75%, #544f3f 86%, #45443b); }
.taskbar > button { width: 59px; height: 38px; margin-right: 3px; border: 1px solid #d5cfc0; border-radius: 3px; background: linear-gradient(135deg, rgba(255,255,255,.45), rgba(255,255,255,.1)); display: grid; place-items: center; box-shadow: inset 0 0 0 1px rgba(60,50,40,.35); flex: none; }
.taskbar .start { width: 56px; border: 0; background: none; box-shadow: none; }
.taskbar .active { width: 52px; background: linear-gradient(rgba(255,255,255,.75), rgba(255,240,235,.55)); box-shadow: 3px 0 #a99686, 4px 0 #e0d5c8; margin-right: 10px; }
.taskbar .stack { width: 52px; background: linear-gradient(rgba(255,255,255,.6), rgba(255,240,230,.35)); box-shadow: 3px 0 #a99686, 4px 0 #e0d5c8; margin-right: 10px; }
.tray { margin-left: auto; display: flex; gap: 10px; align-items: center; padding-right: 12px; }
.tray svg:nth-child(6) { margin-left: 2px; }
.taskbar time { width: 64px; text-align: center; color: #fff; font: 12px/18px "Open Sans", sans-serif; white-space: nowrap; }
.taskbar .desk { width: 14px; margin: 0 0 0 6px; border-color: #7c786d; }

.win { position: absolute; border: 1px solid #c4c4bd; border-radius: 7px; padding: 0 5px 4px; display: flex; flex-direction: column; backdrop-filter: blur(5px); box-shadow: 0 0 0 1px #111, 2px 3px 12px rgba(0,0,0,.65); }
.wt { display: flex; height: 27px; flex: none; }
.wt .winicon { margin-top: 6px; }
.wt h2 { font: 12px/14px "Open Sans", sans-serif; margin: 6px 0 0 5px; flex: 1; white-space: nowrap; }
.x { width: 46px; height: 17px; border: 1px solid #aaa89c; border-top: 0; border-radius: 0 0 5px 5px; display: grid; place-items: center; }
.x path { fill: #fff; stroke: #444; }
.x.red { height: 19px; width: 48px; background: linear-gradient(#d99183, #c44a36 45%, #a51b0c 50%, #c2452f); border-color: #e8c8c0; }
.x.red path { stroke: #633; }
.wbody { flex: 1; min-height: 0; display: flex; flex-direction: column; border: 1px solid #c4c4bd; background: #54cdae; padding: 0 1px 1px; }
.popview { left: 1168px; top: 343px; width: 700px; height: 531px; background: radial-gradient(ellipse 90px 26px at 50px 13px, #8b8b88 30%, transparent), linear-gradient(90deg, rgba(40,40,38,.6) 82%, rgba(190,188,180,.35) 84%); }
.hist { left: 137px; top: 442px; width: 346px; height: 534px; background: linear-gradient(90deg, rgba(170,170,165,.6), rgba(150,150,145,.75) 30%, rgba(90,88,85,.8) 60%, rgba(110,108,102,.9)); }
.pv { flex: 1; min-height: 0; display: flex; }
.pvcanvas { flex: 1; min-width: 0; height: 100%; background: #000; border: 3px solid; border-color: #2f6b5b #b4f0dc #b4f0dc #2f6b5b; border-left-width: 2px; display: block; }
.side { width: 36px; border-left: 2px solid #111; padding-top: 1px; }
.side button { width: 34px; height: 34px; margin-bottom: 1px; background: #9bdada; border: 2px solid #54b89c; outline: 1px solid #000; box-shadow: inset 3px 3px #c9f2f2, inset -3px -3px #578887; display: grid; place-items: center; }
.side svg { width: 21px; height: 21px; outline: 1px solid #000; }
.side .l2 { stroke-width: 3; }
.closebar { flex: none; height: 28px; border: 1px solid #000; padding: 2px; background: #6bbfab; }
.closebar button { width: 100%; height: 22px; background: #9bdada; border: 2px solid; border-color: #c9f2f2 #4d7f7c #4d7f7c #c9f2f2; }
.layer { margin: 3px 2px 0; height: 21px; background: #f00; border: 2px solid #000; padding: 2px 1px; color: #2a0000; flex: none; }
.hmenu { margin-top: 4px; height: 27px; flex: none; border: 1px solid #000; background: #9bdada; box-shadow: inset 2px 2px #c9f2f2, inset -2px -2px #4d7f7c; padding: 6px 13px; display: flex; gap: 16px; }
.frame { margin-top: 2px; flex: 1; min-height: 0; border: 2px solid; border-color: #2f7563 #b4f0dc #b4f0dc #2f7563; display: grid; grid-template: 1fr 15px / 1fr 14px; gap: 5px 4px; padding: 2px 3px 3px; box-shadow: inset 0 0 0 1px #000; }
.list { border: 2px solid; border-color: #2f7563 #d9fff4 #d9fff4 #2f7563; box-shadow: inset 0 1px #d9fff4; padding: 1px 0 0 5px; overflow: hidden; white-space: nowrap; }
table { border-collapse: collapse; table-layout: fixed; width: 248px; }
td { padding: 0; width: 63px; height: 13px; white-space: nowrap; }
td:nth-child(2) { width: 161px; }
td:nth-child(3) { width: 24px; }
.hl { background: #000; color: #54cdae; }
.vs, .hs { display: flex; background: #45a58c; }
.vs { flex-direction: column; align-items: center; }
.hs { align-items: center; }
.vs i, .hs i { flex: 1; background: #54cdae; border: 2px solid; border-color: #b4f0dc #2f7563 #2f7563 #b4f0dc; }
.vs i { width: 12px; }
.hs i { height: 13px; }
.vs path, .hs path { fill: #54cdae; stroke: #b4f0dc; }
.acts { display: flex; justify-content: flex-end; height: 55px; flex: none; padding: 1px 0; }
.pair { display: grid; grid-template-rows: 1fr 1fr; width: 109px; }
.pair button, .upd { background: #fff; border: 1px solid #000; box-shadow: inset 0 0 0 2px #7fc3b3, inset 3px 3px #eee, inset -4px -4px #999; }
.upd { width: 113px; background: #9bdada; box-shadow: inset 0 0 0 2px #6bbfab, inset 4px 4px #c9f2f2, inset -4px -4px #4d7f7c; }
```
FILE: script.js
```js
const NS = "http://www.w3.org/2000/svg";

function add(parent, tag, attrs) {
  const el = document.createElementNS(NS, tag);
  for (const k in attrs) el.setAttribute(k, attrs[k]);
  parent.appendChild(el);
  return el;
}
// Expands column and row lists into a grid of points.
const grid = (xs, ys) => xs.flatMap(x => ys.map(y => [x, y]));
const range = (from, to, n) => Array.from({ length: n }, (_, i) => from + (to - from) * i / (n - 1));

function dots(parent, pts, size, color, round) {
  add(parent, "path", {
    d: pts.map(([x, y]) => `M${x} ${y}h.01`).join(""),
    stroke: color, "stroke-width": size, fill: "none",
    "stroke-linecap": round ? "round" : "square"
  });
}
function pads(parent, rects, color) {
  rects.forEach(([x1, y1, x2, y2]) => add(parent, "rect", { x: x1, y: y1, width: x2 - x1, height: y2 - y1, fill: color }));
}

// Board view
const b = add(document.getElementById("board"), "g", { transform: "translate(-147 -79)" });
add(b, "path", {
  d: "M304.5 275.5V785q0 6.500 6 6.500H489q6 0 6.500 7V864q0 7.500 7 7.500H686q6 0 6.500-6V798q0-6.500 7-6.500H787q7 0 7.500 7V864q0 7.500 7 7.500H878q6 0 6.500-6V275.500q0-6-6-6H310.500q-6 0-6 6z",
  fill: "none", stroke: "#5fb0ea"
});
const rings = [[324.5,288.5],[570.5,288.5],[618.5,288.5],[864.5,288.5],[570.5,854],[618.5,854],[864.5,854]];
dots(b, rings, 26, "#3fb2ff", true);
dots(b, rings, 13, "#c0b8ff", true);
dots(b, [[828.5,290],[824.5,848]], 12, "#3fb2ff", true);

const vias = grid([322,333,343,548,558.5,569], range(337, 655, 32));
dots(b, vias, 7, "#4fb0fa", true);
dots(b, vias, 4, "#b3bcff", true);

const gridA = [406.5,437.5,467.5,498.5];
const gridB = [652.5,693.5,749.5,790.5];
const gridD = [636.5,657.5,678.5,698.5];
const round = [
  ...grid(gridA, [340,360,381,432]), [498.5,452], [498.5,473],
  [693.5,381], [790.5,381], ...grid(gridB, [422,452]),
  ...grid(gridB, [672,703]), [652.5,744], [749.5,744],
  ...grid(gridD.slice(1), [555,586]), [371,363], [371,378]
];
const square = [...grid(gridA, [319,411]), [652,381], [749,381], [693,744], [790,744], [636,555], [636,586]];
dots(b, round, 7, "#5ab8fa", true);
dots(b, square, 8, "#4fb0fa", false);
dots(b, [[432,299],[473.5,299]], 5, "#4fb0fa", false);
dots(b, [...round, ...square], 4, "#aac0ff", true);

pads(b, [[368,318,373,322],[377,316,383,322],[368,326,373,329],[377,325,383,332],[368,337,374,342],[377,337,384,342],
  [368,347,374,353],[377,347,384,353],[368,386,373,393],[368,395,373,402],
  [728,530,741,538],[727,551,741,558],[727,582,741,588],[728,602,741,610]], "#449900");

const drill = [
  [373,296],[391,296],[381,306],[371,424],
  ...grid([660,691,721,752,783,813], [294]), ...grid([593,624,691,721,752,783], [332]),
  ...grid([609,639,706,737,767,798], [347]), ...grid([864], [317,347,378,409,434]),
  ...grid([534,581], range(460, 542, 9)), ...grid([534], range(573, 654, 9)), ...grid([581], range(583, 654, 8)),
  ...grid([486], [529,598,629,660,690,721,752]), ...grid([501], [544,613,644,675,706,736]),
  ...grid([517], [529,598,629,660,690,721,752,782,813]), ...grid([532], [675,706,736,767]),
  ...grid([547], [690,721,782]), ...grid([563], [675,736,767]), ...grid([578], [690,721,752,782,813]),
  ...grid([593], [767,798]), ...grid([609,639,670], [782,813]), [624,798], [655,798],
  ...grid([818], [706,736,767,798]), ...grid([834], [660,690,721,752,782,813]),
  ...grid([849], [644,675,706,736,767,798]), ...grid([864], [660,690,721,752,782]),
  ...grid([688,698,708,719,729,739], [514,524,616,626]), [719,534], [719,606],
  ...grid([826,836,847], [532,544,557,570,583,596,608])
];
dots(b, drill, 2, "#b41420", false);

// Zoomed component, small copy
pads(b, [[751,524,822,616]], "#449900");
dots(b, [[808,524],[751,570],[808,616]], 11, "#000", true);
dots(b, [...grid([762,772,783,793], [532,544,557,570,583,596,608]), ...grid([803,813], [532,544,596,608])], 2, "#8a9a00", false);
dots(b, [[806,570]], 15, "#c0b8ff", true);
add(b, "path", {
  d: "M742.5 511.5h92v113h-92zM743 511L1180 375M835 511L1180 464M835 625L1180 698M743 625L1180 835",
  fill: "none", stroke: "#fff"
});

// Popview
const p = add(document.getElementById("detail"), "g", { transform: "translate(-1177 -375)" });
dots(p, [...grid([1173,1216,1258,1300], [385.5,427.5,802.5]), [1216,468.5], [1216,760.5]], 10, "#f00", true);
const rows = [458.5,510.5,562.5,614.5,666.5,718.5,771];
dots(p, grid([1653,1695,1737], rows), 10, "#f00", true);
pads(p, [[1253,452,1306,484],[1252,538,1307,565],[1252,663,1307,690],[1253,744,1306,776],[1348,428,1638,801]], "#449900");
dots(p, [[1577.5,431.5],[1351.5,614.5],[1577.5,797.5]], 45, "#000", true);
pads(p, [[1540,400,1610,428],[1540,801,1610,830],[1320,585,1348,640]], "#000");
dots(p, [...grid([1393,1435,1476,1518], rows), ...grid([1560], [468.5,510.5,718.5,760.5]), ...grid([1602], [458.5,510.5,718.5,771])], 10, "#b89a08", true);
add(p, "circle", { cx: 1574, cy: 614.5, r: 31, fill: "#c0b8ff", stroke: "#3fb2f5" });
```
